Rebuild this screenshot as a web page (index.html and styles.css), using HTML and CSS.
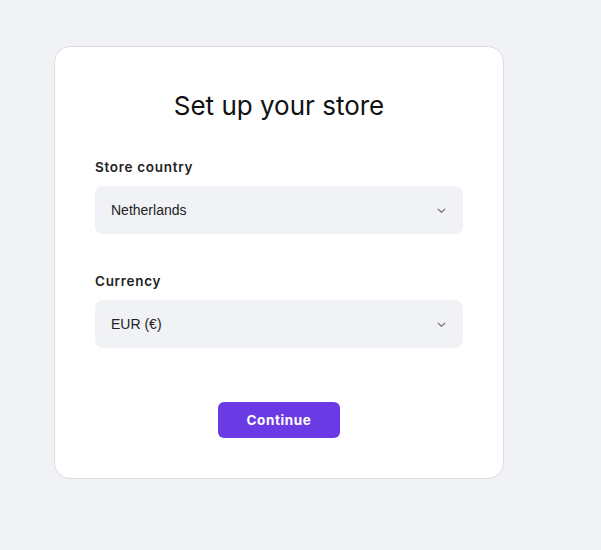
FILE: index.html
```html
<!DOCTYPE html>
<html lang="en">
<head>
<meta charset="utf-8">
<title>Set up your store</title>
<link rel="stylesheet" href="styles.css">
</head>
<body>
<main class="card">
  <h1 class="title">Set up your store</h1>
  <div class="field">
    <label class="label">Store country</label>
    <div class="select"><span>Netherlands</span>
      <svg class="chev" width="9" height="5" viewBox="0 0 9 5"><path d="M0.8 0.8l3.7 3.4 3.7-3.4" fill="none" stroke="#666" stroke-width="1.1"/></svg>
    </div>
  </div>
  <div class="field field-2">
    <label class="label">Currency</label>
    <div class="select"><span>EUR (€)</span>
      <svg class="chev" width="9" height="5" viewBox="0 0 9 5"><path d="M0.8 0.8l3.7 3.4 3.7-3.4" fill="none" stroke="#666" stroke-width="1.1"/></svg>
    </div>
  </div>
  <div class="actions">
    <button class="btn">Continue</button>
  </div>
</main>
</body>
</html>
```
FILE: styles.css
```css
html, body { margin: 0; padding: 0; }
body {
  background: #f1f2f6;
  height: 550px;
  padding: 46px 0 0 54px;
  box-sizing: border-box;
  font-family: Inter, "Liberation Sans", sans-serif;
}
.card {
  width: 450px;
  box-sizing: border-box;
  background: #fff;
  border: 1px solid #dcdde1;
  border-radius: 16px;
  padding: 40px 40px 40px;
}
.title {
  margin: 0;
  font-size: 26px;
  line-height: 38px;
  font-weight: 400;
  text-align: center;
  color: #111;
}
.field { margin-top: 32px; display: flex; flex-direction: column; }
.field-2 { margin-top: 37px; }
.label {
  font-size: 13.5px;
  line-height: 20px;
  font-weight: 600;
  color: #222;
  letter-spacing: 0.7px;
}
.select {
  margin-top: 9px;
  height: 48px;
  background: #f1f2f6;
  border-radius: 8px;
  display: flex;
  align-items: center;
  justify-content: space-between;
  padding: 0 17px 0 16px;
  font-family: "Liberation Sans", Arial, sans-serif;
  font-size: 14px;
  color: #222;
}
.actions { display: flex; justify-content: center; margin-top: 54px; }
.btn {
  width: 122px;
  height: 36px;
  border: 0;
  border-radius: 6px;
  background: #6a3be4;
  color: #fff;
  font-family: Inter, "Liberation Sans", sans-serif;
  font-weight: 700;
  font-size: 13.5px;
  letter-spacing: 0.6px;
}
```
